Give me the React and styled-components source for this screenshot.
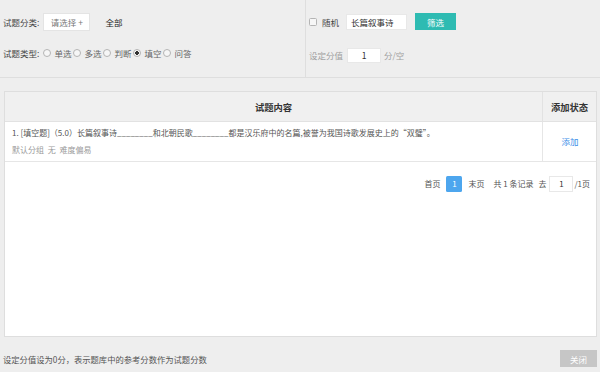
import React from "react";
import styled, {createGlobalStyle} from "styled-components";

const GlobalStyle = createGlobalStyle`
  html, body {
    margin: 0;
    padding: 0;
    background: #eeeeee;
  }
  body {
    font-family: "Noto Sans CJK SC", "Noto Sans", sans-serif;
    font-size: 8.5px;
    color: #444;
  }
  * {
    box-sizing: border-box;
  }
`;

const Page = styled.div`
  width: 600px;
  height: 372px;
  display: flex;
  flex-direction: column;
  background: #eeeeee;
`;

const TopBar = styled.div`
  display: flex;
  height: 78px;
  border-bottom: 1px solid #dedede;
`;

const FilterColumn = styled.div`
  display: flex;
  flex-direction: column;
  padding: 13px 0 0 ${p => p.$padLeft || 3}px;
  width: ${p => p.$width ? p.$width + "px" : "auto"};
  flex: ${p => p.$width ? "none" : 1};
  gap: ${p => p.$gap}px;
  border-right: ${p => p.$divider ? "1px solid #dedede" : "none"};
`;

const FilterRow = styled.div`
  display: flex;
  align-items: center;
  height: ${p => p.$h || 18}px;
  line-height: 12px;
  white-space: nowrap;
`;

const Label = styled.span`
  color: ${p => p.$muted ? "#a0a0a0" : "#444"};
  margin-right: ${p => p.$mr || 0}px;
  margin-left: ${p => p.$ml || 0}px;
`;

const SelectButton = styled.div`
  width: 47px;
  height: 18px;
  background: #fff;
  border: 1px solid #e4e4e4;
  color: #777;
  display: flex;
  align-items: center;
  justify-content: center;
  margin-left: 4px;
`;

const AllText = styled.span`
  color: #222;
  margin-left: 15px;
`;

const RadioItem = styled.label`
  display: flex;
  align-items: center;
  margin-right: 2px;
  color: #666;
`;

const Radio = styled.input.attrs({type: "radio"})`
  appearance: none;
  width: 8px;
  height: 8px;
  margin: 0 3px 0 0;
  border-radius: 50%;
  border: 1px solid #b4b4b4;
  background: #f6f6f6;
  &:checked {
    background: radial-gradient(circle, #333 0 1.6px, #f6f6f6 2px);
  }
`;

const Checkbox = styled.input.attrs({type: "checkbox"})`
  appearance: none;
  width: 8px;
  height: 8px;
  margin: 0 5px 0 0;
  border: 1px solid #b4b4b4;
  border-radius: 1.5px;
  background: #f6f6f6;
`;

const TextField = styled.input`
  width: ${p => p.$w}px;
  height: ${p => p.$h || 16}px;
  border: 1px solid #e8e8e8;
  background: #fff;
  font: inherit;
  color: #333;
  padding: 0 4px;
  text-align: ${p => p.$center ? "center" : "left"};
  outline: none;
  margin: 0 ${p => p.$mr || 0}px 0 ${p => p.$ml || 0}px;
`;

const FilterButton = styled.button`
  width: 41px;
  height: 17px;
  border: none;
  background: #2ebbb2;
  color: #fff;
  font: inherit;
  padding: 0;
  margin-left: 8px;
`;

const TablePanel = styled.div`
  margin: 13px 0 0 4px;
  width: 593px;
  height: 246px;
  background: #fff;
  border: 1px solid #dedede;
  display: flex;
  flex-direction: column;
`;

const TableGrid = styled.div`
  display: grid;
  grid-template-columns: 1fr 54px;
`;

const HeadCell = styled.div`
  height: 30px;
  background: #f0f0f0;
  border-bottom: 1px solid #e2e2e2;
  border-left: ${p => p.$sep ? "1px solid #e2e2e2" : "none"};
  display: flex;
  align-items: center;
  justify-content: center;
  font-weight: bold;
  font-size: 9.3px;
  color: #333;
`;

const BodyCell = styled.div`
  height: 40px;
  border-bottom: 1px solid #e6e6e6;
  border-left: ${p => p.$sep ? "1px solid #e6e6e6" : "none"};
  display: flex;
  flex-direction: column;
  justify-content: ${p => p.$center ? "center" : "flex-start"};
  align-items: ${p => p.$center ? "center" : "flex-start"};
  padding: ${p => p.$center ? "0" : "2px 7px"};
  font-size: ${p => p.$center ? "8.5px" : "8px"};
  line-height: 17px;
  white-space: nowrap;
`;

const QuestionText = styled.div`
  color: #555;
`;

const MetaText = styled.div`
  color: #9a9a9a;
  word-spacing: 2px;
`;

const AddLink = styled.a`
  color: #3d8ee8;
  text-decoration: none;
  margin-left: 1px;
`;

const Pager = styled.div`
  display: flex;
  justify-content: flex-end;
  align-items: center;
  padding: 13px 6px 0 0;
  height: 30px;
  color: #555;
  font-size: 8px;
  white-space: nowrap;
`;

const PagerText = styled.span`
  margin-left: ${p => p.$ml || 0}px;
`;

const PageNum = styled.span`
  width: 16px;
  height: 16px;
  margin-left: 6px;
  border-radius: 1.5px;
  background: #4da6ee;
  color: #fff;
  display: flex;
  align-items: center;
  justify-content: center;
`;

const Footer = styled.div`
  display: flex;
  justify-content: space-between;
  align-items: center;
  padding: 13px 3px 0 3px;
`;

const Hint = styled.span`
  color: #555;
  font-size: 8.3px;
`;

const CloseButton = styled.button`
  width: 37px;
  height: 17px;
  border: none;
  padding: 0;
  background: #c6c6c6;
  color: #fff;
  font: inherit;
`;

const types = ["单选", "多选", "判断", "填空", "问答"];

export default function App() {
  return (
    <Page>
      <GlobalStyle/>
      <TopBar>
        <FilterColumn $width={306} $padLeft={3} $gap={13} $divider>
          <FilterRow>
            <Label>试题分类:</Label>
            <SelectButton>请选择 +</SelectButton>
            <AllText>全部</AllText>
          </FilterRow>
          <FilterRow>
            <Label $mr={4}>试题类型:</Label>
            {types.map(t => (
              <RadioItem key={t}>
                <Radio name="type" defaultChecked={t === "填空"}/>
                {t}
              </RadioItem>
            ))}
          </FilterRow>
        </FilterColumn>
        <FilterColumn $padLeft={3} $gap={17}>
          <FilterRow $h={17}>
            <Checkbox/>
            <Label>随机</Label>
            <TextField $w={61} $ml={7} defaultValue="长篇叙事诗"/>
            <FilterButton>筛选</FilterButton>
          </FilterRow>
          <FilterRow $h={16}>
            <Label $muted>设定分值</Label>
            <TextField $w={34} $h={15} $ml={4} $mr={3} $center defaultValue="1"/>
            <Label $muted>分/空</Label>
          </FilterRow>
        </FilterColumn>
      </TopBar>

      <TablePanel>
        <TableGrid>
          <HeadCell>试题内容</HeadCell>
          <HeadCell $sep>添加状态</HeadCell>
          <BodyCell>
            <QuestionText>
              1. [填空题]（5.0）长篇叙事诗________和北朝民歌________都是汉乐府中的名篇,被誉为我国诗歌发展史上的“双璧”。
            </QuestionText>
            <MetaText>默认分组 无 难度偏易</MetaText>
          </BodyCell>
          <BodyCell $sep $center>
            <AddLink href="#">添加</AddLink>
          </BodyCell>
        </TableGrid>
        <Pager>
          <PagerText>首页</PagerText>
          <PageNum>1</PageNum>
          <PagerText $ml={6}>末页</PagerText>
          <PagerText $ml={9}>共 1 条记录</PagerText>
          <PagerText $ml={5}>去</PagerText>
          <TextField $w={24} $ml={3} $mr={1} $center defaultValue="1"/>
          <PagerText>/1页</PagerText>
        </Pager>
      </TablePanel>

      <Footer>
        <Hint>设定分值设为0分，表示题库中的参考分数作为试题分数</Hint>
        <CloseButton>关闭</CloseButton>
      </Footer>
    </Page>
  );
}
